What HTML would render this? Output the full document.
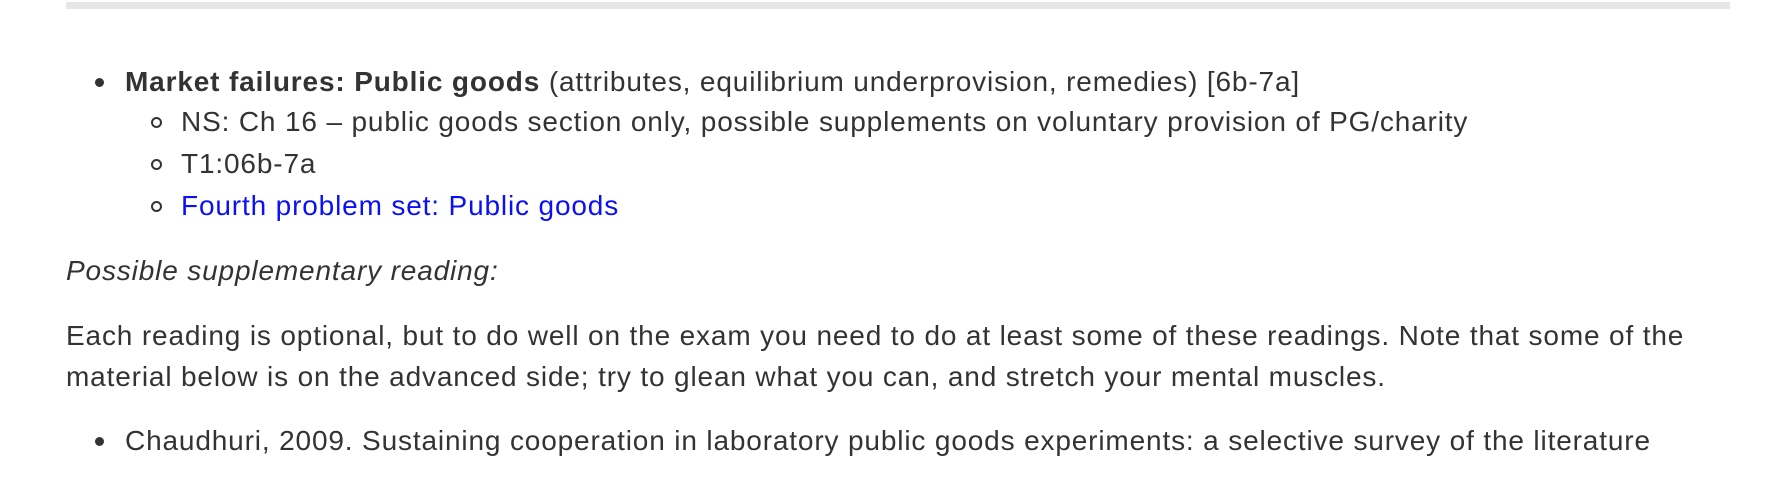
<!DOCTYPE html>
<html><head><meta charset="utf-8"><style>
html,body{margin:0;padding:0;background:#fff;width:1776px;height:504px;overflow:hidden}
body{font-family:"Liberation Sans",Arial,sans-serif;font-size:28px;letter-spacing:0.85px;color:#333;position:relative}
.bar{position:absolute;left:66px;top:2px;width:1664px;height:7px;background:#e6e6e6}
.l{position:absolute;white-space:nowrap;line-height:40px;height:40px}
.dot{position:absolute;width:9px;height:9px;border-radius:50%;background:#333}
.circ{position:absolute;width:7px;height:7px;border-radius:50%;border:2px solid #333;box-sizing:content-box}
a{color:#0b10f5;text-decoration:none}
</style></head><body>
<div class="bar"></div>
<div class="dot" style="left:95px;top:78px"></div>
<div class="l" style="left:125px;top:62px"><b>Market failures: Public goods</b> (attributes, equilibrium underprovision, remedies) [6b-7a]</div>
<div class="circ" style="left:151px;top:117px"></div>
<div class="l" style="left:181px;top:102px">NS: Ch 16 – public goods section only, possible supplements on voluntary provision of PG/charity</div>
<div class="circ" style="left:151px;top:159px"></div>
<div class="l" style="left:181px;top:144px">T1:06b-7a</div>
<div class="circ" style="left:151px;top:201px"></div>
<div class="l" style="left:181px;top:186px"><a>Fourth problem set: Public goods</a></div>
<div class="l" style="left:66px;top:251px"><i>Possible supplementary reading:</i></div>
<div class="l" style="left:66px;top:316px">Each reading is optional, but to do well on the exam you need to do at least some of these readings. Note that some of the</div>
<div class="l" style="left:66px;top:357px">material below is on the advanced side; try to glean what you can, and stretch your mental muscles.</div>
<div class="dot" style="left:95px;top:437px"></div>
<div class="l" style="left:125px;top:421px">Chaudhuri, 2009. Sustaining cooperation in laboratory public goods experiments: a selective survey of the literature</div>
</body></html>
